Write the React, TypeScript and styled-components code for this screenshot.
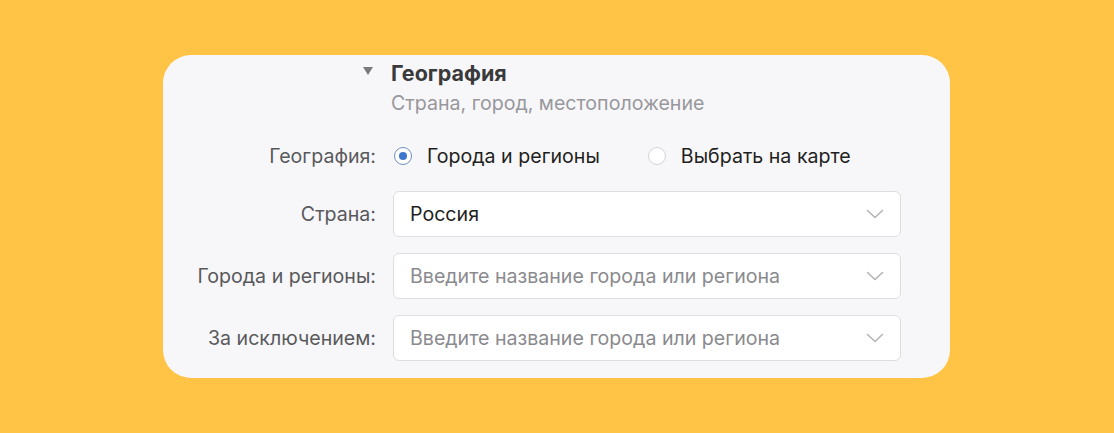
import React from "react";
import styled, { createGlobalStyle } from "styled-components";

const Global = createGlobalStyle`
  html, body { margin: 0; padding: 0; }
  body {
    background: #ffc445;
    font-family: Inter, "Open Sans", "Liberation Sans", Arial, sans-serif;
    -webkit-font-smoothing: antialiased;
  }
`;

const Page = styled.div`
  width: 1114px;
  height: 433px;
  box-sizing: border-box;
  padding: 55px 0 0 163px;
`;

const Card = styled.div`
  width: 787px;
  height: 323px;
  box-sizing: border-box;
  background: #f7f7f9;
  border-radius: 28px;
  padding: 6px 49px 0 23px;
  display: grid;
  grid-template-columns: 190px 508px;
  column-gap: 17px;
  align-items: center;
  align-content: start;
`;

const Toggle = styled.div`
  justify-self: end;
  align-self: start;
  margin-top: 6px;
  margin-right: 3px;
  width: 0;
  height: 0;
  border-left: 5px solid transparent;
  border-right: 5px solid transparent;
  border-top: 8px solid #7a7a7e;
`;

const HeaderText = styled.div`
  display: flex;
  flex-direction: column;
  margin-left: -2px;
`;

const Title = styled.div`
  font-size: 21.5px;
  font-weight: 700;
  color: #3a3a3c;
  line-height: 24px;
`;

const Subtitle = styled.div`
  font-size: 19.6px;
  color: #98989c;
  line-height: 22px;
  margin-top: 7px;
`;

const Label = styled.div<{ $mt?: number }>`
  justify-self: end;
  font-size: 19.6px;
  color: #59595c;
  margin-top: ${(p) => p.$mt ?? 0}px;
`;

const RadioGroup = styled.div`
  display: flex;
  align-items: center;
  gap: 47px;
  margin-top: 30px;
  height: 24px;
`;

const RadioItem = styled.label`
  display: flex;
  align-items: center;
  gap: 15px;
  font-size: 19.6px;
  color: #1f1f21;
  margin-left: 1px;
`;

const RadioCircle = styled.span<{ $checked?: boolean }>`
  width: 18px;
  height: 18px;
  box-sizing: border-box;
  border-radius: 50%;
  background: #fff;
  border: 1.5px solid ${(p) => (p.$checked ? "#6f8fbd" : "#d4d4d8")};
  display: flex;
  align-items: center;
  justify-content: center;
  &::after {
    content: "";
    width: 8px;
    height: 8px;
    border-radius: 50%;
    background: ${(p) => (p.$checked ? "#3d78cc" : "transparent")};
  }
`;

const Select = styled.div<{ $mt?: number }>`
  height: 46px;
  box-sizing: border-box;
  background: #fff;
  border: 1px solid #dedee2;
  border-radius: 6px;
  display: flex;
  align-items: center;
  justify-content: space-between;
  padding: 0 16px 0 16px;
  margin-top: ${(p) => p.$mt ?? 0}px;
`;

const Value = styled.span<{ $placeholder?: boolean }>`
  font-size: 19.6px;
  color: ${(p) => (p.$placeholder ? "#8a8a8e" : "#1f1f21")};
`;

const Chevron = () => (
  <svg width="18" height="10" viewBox="0 0 18 10" fill="none">
    <path d="M1.5 1.5 L9 8.5 L16.5 1.5" stroke="#b4b4b8" strokeWidth="1.6" strokeLinecap="round" strokeLinejoin="round" />
  </svg>
);

const fields = [
  { label: "Страна:", value: "Россия", placeholder: false, mt: 23 },
  { label: "Города и регионы:", value: "Введите название города или региона", placeholder: true, mt: 16 },
  { label: "За исключением:", value: "Введите название города или региона", placeholder: true, mt: 16 },
];

export default function App() {
  return (
    <>
      <Global />
      <Page>
        <Card>
          <Toggle />
          <HeaderText>
            <Title>География</Title>
            <Subtitle>Страна, город, местоположение</Subtitle>
          </HeaderText>

          <Label $mt={30}>География:</Label>
          <RadioGroup>
            <RadioItem>
              <RadioCircle $checked />
              Города и регионы
            </RadioItem>
            <RadioItem>
              <RadioCircle />
              Выбрать на карте
            </RadioItem>
          </RadioGroup>

          {fields.map((f) => (
            <React.Fragment key={f.label}>
              <Label $mt={f.mt}>{f.label}</Label>
              <Select $mt={f.mt}>
                <Value $placeholder={f.placeholder}>{f.value}</Value>
                <Chevron />
              </Select>
            </React.Fragment>
          ))}
        </Card>
      </Page>
    </>
  );
}
